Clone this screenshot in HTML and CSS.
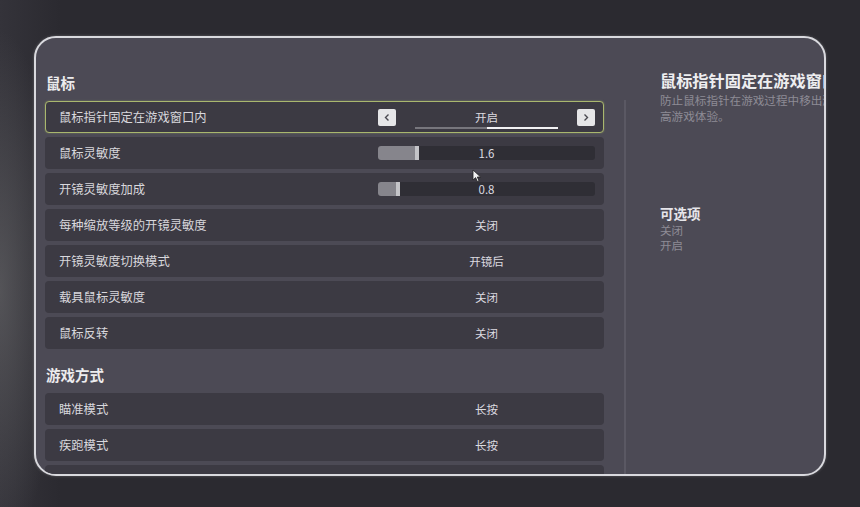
FILE: index.html
```html
<!DOCTYPE html>
<html lang="zh-CN">
<head>
    <meta charset="utf-8">
    <title>设置 - 鼠标</title>
    <link rel="stylesheet" href="styles.css">
</head>
<body>
    <div id="settings">
        <div class="list">
            <div class="section">
                <div class="section-title">鼠标</div>
                <div class="row active">
                    <div class="label">鼠标指针固定在游戏窗口内</div>
                    <div class="control">
                        <div class="arrow">
                            <svg width="8" height="9" viewBox="0 0 8 9"><polyline points="5.5,1.5 2.5,4.5 5.5,7.5" fill="none" stroke="#4a4950" stroke-width="1.4"/></svg>
                        </div>
                        <div class="switch">
                            <div class="value">开启</div>
                            <div class="pager"><span></span><span class="on"></span></div>
                        </div>
                        <div class="arrow">
                            <svg width="8" height="9" viewBox="0 0 8 9"><polyline points="2.5,1.5 5.5,4.5 2.5,7.5" fill="none" stroke="#4a4950" stroke-width="1.4"/></svg>
                        </div>
                    </div>
                </div>
                <div class="row">
                    <div class="label">鼠标灵敏度</div>
                    <div class="control">
                        <div class="slider">
                            <div class="fill" style="width: 37px"></div>
                            <div class="value">1.6</div>
                        </div>
                    </div>
                </div>
                <div class="row">
                    <div class="label">开镜灵敏度加成</div>
                    <div class="control">
                        <div class="slider">
                            <div class="fill" style="width: 18px"></div>
                            <div class="value">0.8</div>
                        </div>
                    </div>
                </div>
                <div class="row">
                    <div class="label">每种缩放等级的开镜灵敏度</div>
                    <div class="control"><div class="value">关闭</div></div>
                </div>
                <div class="row">
                    <div class="label">开镜灵敏度切换模式</div>
                    <div class="control"><div class="value">开镜后</div></div>
                </div>
                <div class="row">
                    <div class="label">载具鼠标灵敏度</div>
                    <div class="control"><div class="value">关闭</div></div>
                </div>
                <div class="row">
                    <div class="label">鼠标反转</div>
                    <div class="control"><div class="value">关闭</div></div>
                </div>
            </div>
            <div class="section">
                <div class="section-title">游戏方式</div>
                <div class="row">
                    <div class="label">瞄准模式</div>
                    <div class="control"><div class="value">长按</div></div>
                </div>
                <div class="row">
                    <div class="label">疾跑模式</div>
                    <div class="control"><div class="value">长按</div></div>
                </div>
                <div class="row"></div>
            </div>
        </div>
        <div class="divider"></div>
        <div class="info">
            <div class="info-title">鼠标指针固定在游戏窗口内</div>
            <div class="info-desc">防止鼠标指针在游戏过程中移出游戏窗口，提高游戏体验。</div>
            <div class="options-title">可选项</div>
            <div class="option">关闭</div>
            <div class="option">开启</div>
        </div>
    </div>
    <svg class="cursor" width="10" height="14" viewBox="0 0 10 14">
        <path d="M1 1 L1 11 L3.6 8.6 L5.4 12.6 L7 11.9 L5.3 8 L8.6 8 Z" fill="#f2f2f2" stroke="#222" stroke-width="0.8"/>
    </svg>
</body>
</html>
```

FILE: styles.css
```css
html, body {
    margin: 0;
    height: 100%;
}
body {
    background-color: #2b2a30;
    background-image:
        radial-gradient(ellipse 60px 260px at 0px 290px, rgba(110, 110, 112, 0.55), rgba(110, 110, 112, 0) 100%),
        linear-gradient(to right, #34333a 0px, #2b2a30 60px);
    font-family: "Noto Sans CJK SC", "Noto Sans", sans-serif;
    padding: 36px 0 0 34px;
    box-sizing: border-box;
    overflow: hidden;
}
#settings {
    width: 792px;
    height: 440px;
    box-sizing: border-box;
    border: 2px solid #d9d9de;
    border-radius: 22px;
    background-color: #4c4a55;
    box-shadow: 0 0 3px rgba(255, 255, 255, 0.25);
    overflow: hidden;
    display: flex;
    padding-left: 9px;
}
.list {
    width: 559px;
    flex-shrink: 0;
    padding-top: 35px;
}
.section + .section {
    margin-top: 16px;
}
.section-title {
    color: #ececee;
    font-size: 14.5px;
    font-weight: bold;
    line-height: 20px;
    height: 20px;
    margin-bottom: 8px;
    padding-left: 1px;
}
.row {
    height: 32px;
    box-sizing: border-box;
    margin-bottom: 4px;
    background-color: #3c3a43;
    border-radius: 4px;
    display: flex;
    align-items: center;
    padding-left: 14px;
    padding-right: 9px;
}
.section-title + .row {
    margin-top: 1px;
}
.row.active {
    border: 1px solid #a9b76e;
    box-shadow: 0 0 2px rgba(169, 183, 110, 0.5);
    padding-left: 13px;
    padding-right: 8px;
}
.label {
    flex: 1;
    color: #d8d7dc;
    font-size: 12.3px;
}
.control {
    width: 217px;
    flex-shrink: 0;
    display: flex;
    align-items: center;
    justify-content: center;
}
.value {
    color: #dcdbe0;
    font-size: 11.5px;
    text-align: center;
}
.arrow {
    width: 18px;
    height: 17px;
    background-color: #e6e6e8;
    border-radius: 2px;
    display: flex;
    align-items: center;
    justify-content: center;
}
.switch {
    flex: 1;
    margin: 0 19px;
    position: relative;
    height: 30px;
    display: flex;
    align-items: center;
    justify-content: center;
}
.pager {
    position: absolute;
    left: 0;
    right: 0;
    bottom: 3px;
    display: flex;
    height: 2px;
}
.pager span {
    flex: 1;
    background-color: #77767d;
}
.pager span.on {
    background-color: #f2f2f4;
}
.slider {
    width: 217px;
    height: 14px;
    background-color: #2f2e35;
    border-radius: 3px;
    position: relative;
    display: flex;
    align-items: center;
    justify-content: center;
}
.slider .fill {
    position: absolute;
    left: 0;
    top: 0;
    bottom: 0;
    background-color: #86858c;
    border-radius: 3px 0 0 3px;
    border-right: 4px solid #c4c4c8;
}
.slider .value {
    position: relative;
}
.divider {
    width: 2px;
    flex-shrink: 0;
    margin-left: 20px;
    margin-top: 62px;
    background-color: #5a5863;
}
.info {
    margin-left: 34px;
    width: 240px;
    flex-shrink: 0;
    padding-top: 30px;
}
.info-title {
    color: #eeeef0;
    font-size: 16.2px;
    font-weight: bold;
    line-height: 24px;
    white-space: nowrap;
}
.info-desc {
    color: #8e8c95;
    font-size: 11.6px;
    line-height: 16px;
    width: 234px;
}
.options-title {
    color: #e6e5ea;
    font-size: 13.5px;
    font-weight: bold;
    line-height: 18px;
    margin-top: 80px;
    margin-bottom: 1px;
}
.option {
    color: #8e8c95;
    font-size: 11.5px;
    line-height: 15px;
}
.cursor {
    position: absolute;
    left: 472px;
    top: 169px;
}
```
